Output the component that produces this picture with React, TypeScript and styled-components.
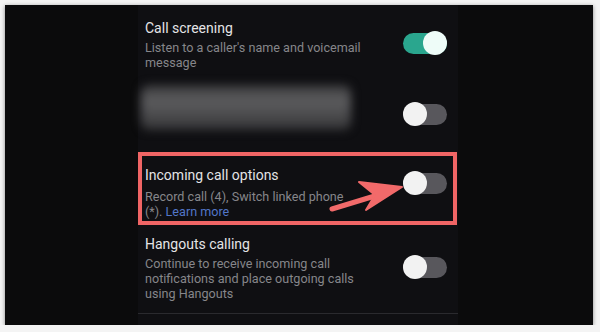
import styled, { createGlobalStyle } from "styled-components";

/* ── GLOBAL ── */

const GlobalStyle = createGlobalStyle`
  html, body {
    margin: 0;
    padding: 0;
    background: #f4f4f4;
  }
  body {
    font-family: Roboto, "Noto Sans", sans-serif;
  }
`;

/* ── LAYOUT ── */

const Frame = styled.div`
  margin: 5px 0 0 5px;
  width: 588px;
  height: 320px;
  background: #0b0b0c;
  box-shadow: 0 1px 4px rgba(0, 0, 0, 0.45);
  display: flex;
  justify-content: center;
  overflow: hidden;
`;

const Screen = styled.div`
  position: relative;
  width: 320px;
  margin-left: -2px;
  background: #0f0f12;
  display: flex;
  flex-direction: column;
`;

const SettingRow = styled.div<{ $pt: number }>`
  display: flex;
  align-items: flex-start;
  justify-content: space-between;
  padding: ${(p) => p.$pt}px 11px 0 7px;
`;

const Highlight = styled.div`
  margin-top: 22px;
  width: 319px;
  box-sizing: border-box;
  border: 4px solid #f06565;
  display: flex;
  align-items: flex-start;
  justify-content: space-between;
  padding: 10px 6px 2px 3px;
`;

const TextBlock = styled.div`
  display: flex;
  flex-direction: column;
`;

const Title = styled.div<{ $gap?: number }>`
  font-size: 14px;
  line-height: 18px;
  color: #e4e4e6;
  margin-bottom: ${(p) => p.$gap ?? 3}px;
`;

const Summary = styled.div`
  font-size: 12.6px;
  line-height: 15px;
  color: #86868a;
  white-space: nowrap;
`;

const Link = styled.span`
  color: #5276c8;
`;

const Blurred = styled.div`
  width: 210px;
  height: 45px;
  margin-left: -4px;
  border-radius: 8px;
  background: linear-gradient(
    180deg,
    #3a3a3c 0%,
    #5c5c5e 35%,
    #4c4c4e 65%,
    #333335 100%
  );
  filter: blur(5px);
`;

const Divider = styled.div`
  margin-top: 12px;
  height: 1px;
  background: #2a2a2e;
`;

/* ── TOGGLE ── */

const Track = styled.div<{ $on: boolean; $mt: number }>`
  position: relative;
  flex: none;
  width: 44px;
  height: 21px;
  margin-top: ${(p) => p.$mt}px;
  border-radius: 11px;
  background: ${(p) => (p.$on ? "#2aa68e" : "#58575c")};
`;

const Knob = styled.div<{ $on: boolean }>`
  position: absolute;
  top: -2px;
  left: ${(p) => (p.$on ? "20px" : "0")};
  width: 24px;
  height: 24px;
  border-radius: 50%;
  background: ${(p) => (p.$on ? "#eefcf8" : "#f2f2f2")};
`;

function Toggle({ on, mt }: { on?: boolean; mt: number }) {
  return (
    <Track $on={!!on} $mt={mt}>
      <Knob $on={!!on} />
    </Track>
  );
}

/* ── ANNOTATION ── */

const Arrow = styled.svg`
  position: absolute;
  left: 190px;
  top: 173px;
  width: 78px;
  height: 36px;
  overflow: visible;
`;

/* ── COMPONENT ── */

export default function App() {
  return (
    <>
      <GlobalStyle />
      <Frame>
        <Screen>
          <SettingRow $pt={14}>
            <TextBlock>
              <Title>Call screening</Title>
              <Summary>
                Listen to a caller's name and voicemail
                <br />
                message
              </Summary>
            </TextBlock>
            <Toggle on mt={14} />
          </SettingRow>

          <SettingRow $pt={15}>
            <Blurred />
            <Toggle mt={19} />
          </SettingRow>

          <Highlight>
            <TextBlock>
              <Title $gap={5}>Incoming call options</Title>
              <Summary>
                Record call (4), Switch linked phone
                <br />
                (*). <Link>Learn more</Link>
              </Summary>
            </TextBlock>
            <Toggle mt={7} />
          </Highlight>

          <SettingRow $pt={10}>
            <TextBlock>
              <Title>Hangouts calling</Title>
              <Summary>
                Continue to receive incoming call
                <br />
                notifications and place outgoing calls
                <br />
                using Hangouts
              </Summary>
            </TextBlock>
            <Toggle mt={22} />
          </SettingRow>

          <Divider />

          <Arrow viewBox="0 0 78 36">
            <line
              x1="4"
              y1="31"
              x2="50"
              y2="17"
              stroke="#f26a6a"
              strokeWidth="5"
              strokeLinecap="round"
            />
            <polygon
              points="74,9 31,4 47,17 38,32"
              fill="#f26a6a"
              stroke="#f26a6a"
              strokeWidth="2"
              strokeLinejoin="round"
            />
          </Arrow>
        </Screen>
      </Frame>
    </>
  );
}
